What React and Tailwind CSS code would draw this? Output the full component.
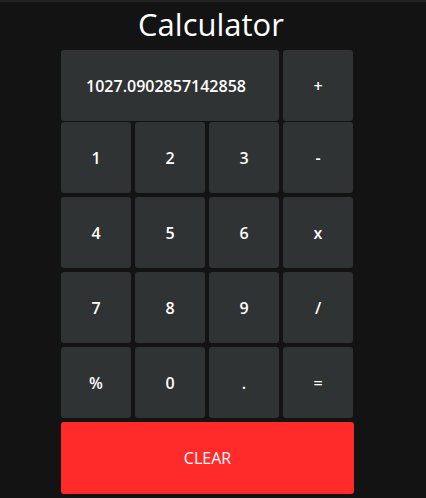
const keys = [
  ["1", "2", "3", "-"],
  ["4", "5", "6", "x"],
  ["7", "8", "9", "/"],
  ["%", "0", ".", "="]
];

export default function App() {
  return (
    <div className="min-h-[498px] border-t-2 border-[#222222] bg-[#131313] font-['Open_Sans',sans-serif] text-white">
      <div className="w-[415px]">
        <h1 className="pl-[7px] text-center text-[31px] leading-[44px] text-white">Calculator</h1>
        <div className="mx-auto mt-1 flex w-[293px] flex-col">
          <div className="flex h-[71px] gap-1">
            <button className="flex w-[218px] items-center justify-center rounded-[3px] bg-[#303333] pr-2 text-base font-semibold">
              1027.0902857142858
            </button>
            <Key label="+" />
          </div>
          <div className="mt-px grid grid-cols-[70px_70px_70px_70px] gap-1">
            {keys.flat().map((k) => (
              <Key key={k} label={k} />
            ))}
          </div>
          <button className="mt-1 h-[72px] w-[293px] rounded-[3px] bg-[#ff2a2a] text-base text-white">
            CLEAR
          </button>
        </div>
      </div>
    </div>
  );
}

function Key({ label }) {
  return (
    <button className="flex h-[71px] w-[70px] items-center justify-center rounded-[3px] bg-[#303333] text-base font-semibold text-white">
      {label}
    </button>
  );
}
